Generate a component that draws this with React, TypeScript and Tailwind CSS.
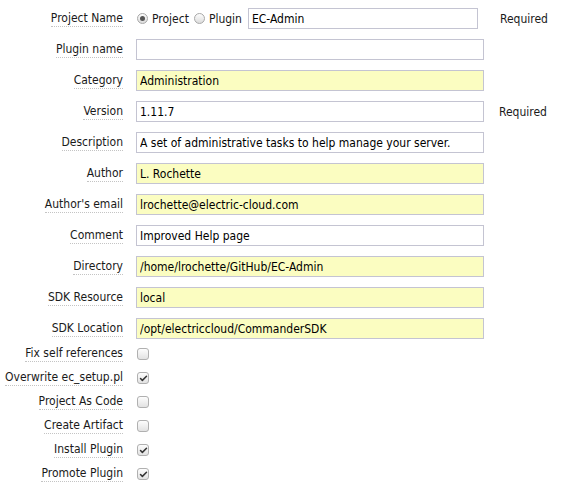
import { Check } from "lucide-react";

type Field = { label: string; value: string; yellow?: boolean; required?: boolean };

const fields: Field[] = [
  { label: "Plugin name", value: "" },
  { label: "Category", value: "Administration", yellow: true },
  { label: "Version", value: "1.11.7", required: true },
  { label: "Description", value: "A set of administrative tasks to help manage your server." },
  { label: "Author", value: "L. Rochette", yellow: true },
  { label: "Author's email", value: "lrochette@electric-cloud.com", yellow: true },
  { label: "Comment", value: "Improved Help page" },
  { label: "Directory", value: "/home/lrochette/GitHub/EC-Admin", yellow: true },
  { label: "SDK Resource", value: "local", yellow: true },
  { label: "SDK Location", value: "/opt/electriccloud/CommanderSDK", yellow: true },
];

const checks = [
  { label: "Fix self references", checked: false },
  { label: "Overwrite ec_setup.pl", checked: true },
  { label: "Project As Code", checked: false },
  { label: "Create Artifact", checked: false },
  { label: "Install Plugin", checked: true },
  { label: "Promote Plugin", checked: true },
];

function Label({ text }: { text: string }) {
  return (
    <div className="w-[123px] shrink-0 flex justify-end">
      <span className="border-b border-dotted border-[#c4c4c4] leading-[15px]">{text}</span>
    </div>
  );
}

function Radio({ on }: { on?: boolean }) {
  return (
    <span className="w-[11px] h-[11px] rounded-full border border-[#a8a8a8] bg-gradient-to-b from-[#fdfdfd] to-[#dcdcdc] flex items-center justify-center shrink-0">
      {on && <span className="w-[5px] h-[5px] rounded-full bg-[#555]" />}
    </span>
  );
}

function Box({ on }: { on: boolean }) {
  return (
    <span className="w-[12px] h-[12px] rounded-[3px] border border-[#b0b0b0] bg-gradient-to-b from-[#fdfdfd] to-[#e2e2e2] flex items-center justify-center">
      {on && <Check className="w-[9px] h-[9px] text-[#333]" strokeWidth={4} />}
    </span>
  );
}

const inputCls =
  "h-[21px] border border-[#c4c4d2] px-[3px] text-[12px] text-black outline-none font-[inherit]";

export default function App() {
  return (
    <div
      className="w-[561px] h-[490px] bg-white text-[12px] text-[#1a1a1a] pt-[3px]"
      style={{ fontFamily: '"DejaVu Sans Condensed", "DejaVu Sans", sans-serif' }}
    >
      <div className="h-[31px] flex items-center">
        <Label text="Project Name" />
        <div className="ml-[14px] flex items-center">
          <Radio on />
          <span className="ml-[4px]">Project</span>
          <span className="ml-[5px]"><Radio /></span>
          <span className="ml-[4px]">Plugin</span>
        </div>
        <input
          readOnly
          defaultValue="EC-Admin"
          className={`${inputCls} ml-[6px] w-[230px] bg-white`}
        />
        <span className="ml-[22px]">Required</span>
      </div>

      {fields.map((f) => (
        <div key={f.label} className="h-[31px] flex items-center">
          <Label text={f.label} />
          <input
            readOnly
            defaultValue={f.value}
            className={`${inputCls} ml-[13px] w-[348px] ${f.yellow ? "bg-[#fbfdc1]" : "bg-white"}`}
          />
          {f.required && <span className="ml-[15px]">Required</span>}
        </div>
      ))}

      <div className="-mt-[2px]">
        {checks.map((c) => (
          <div key={c.label} className="h-[24px] flex items-center">
            <Label text={c.label} />
            <span className="ml-[14px]">
              <Box on={c.checked} />
            </span>
          </div>
        ))}
      </div>
    </div>
  );
}
